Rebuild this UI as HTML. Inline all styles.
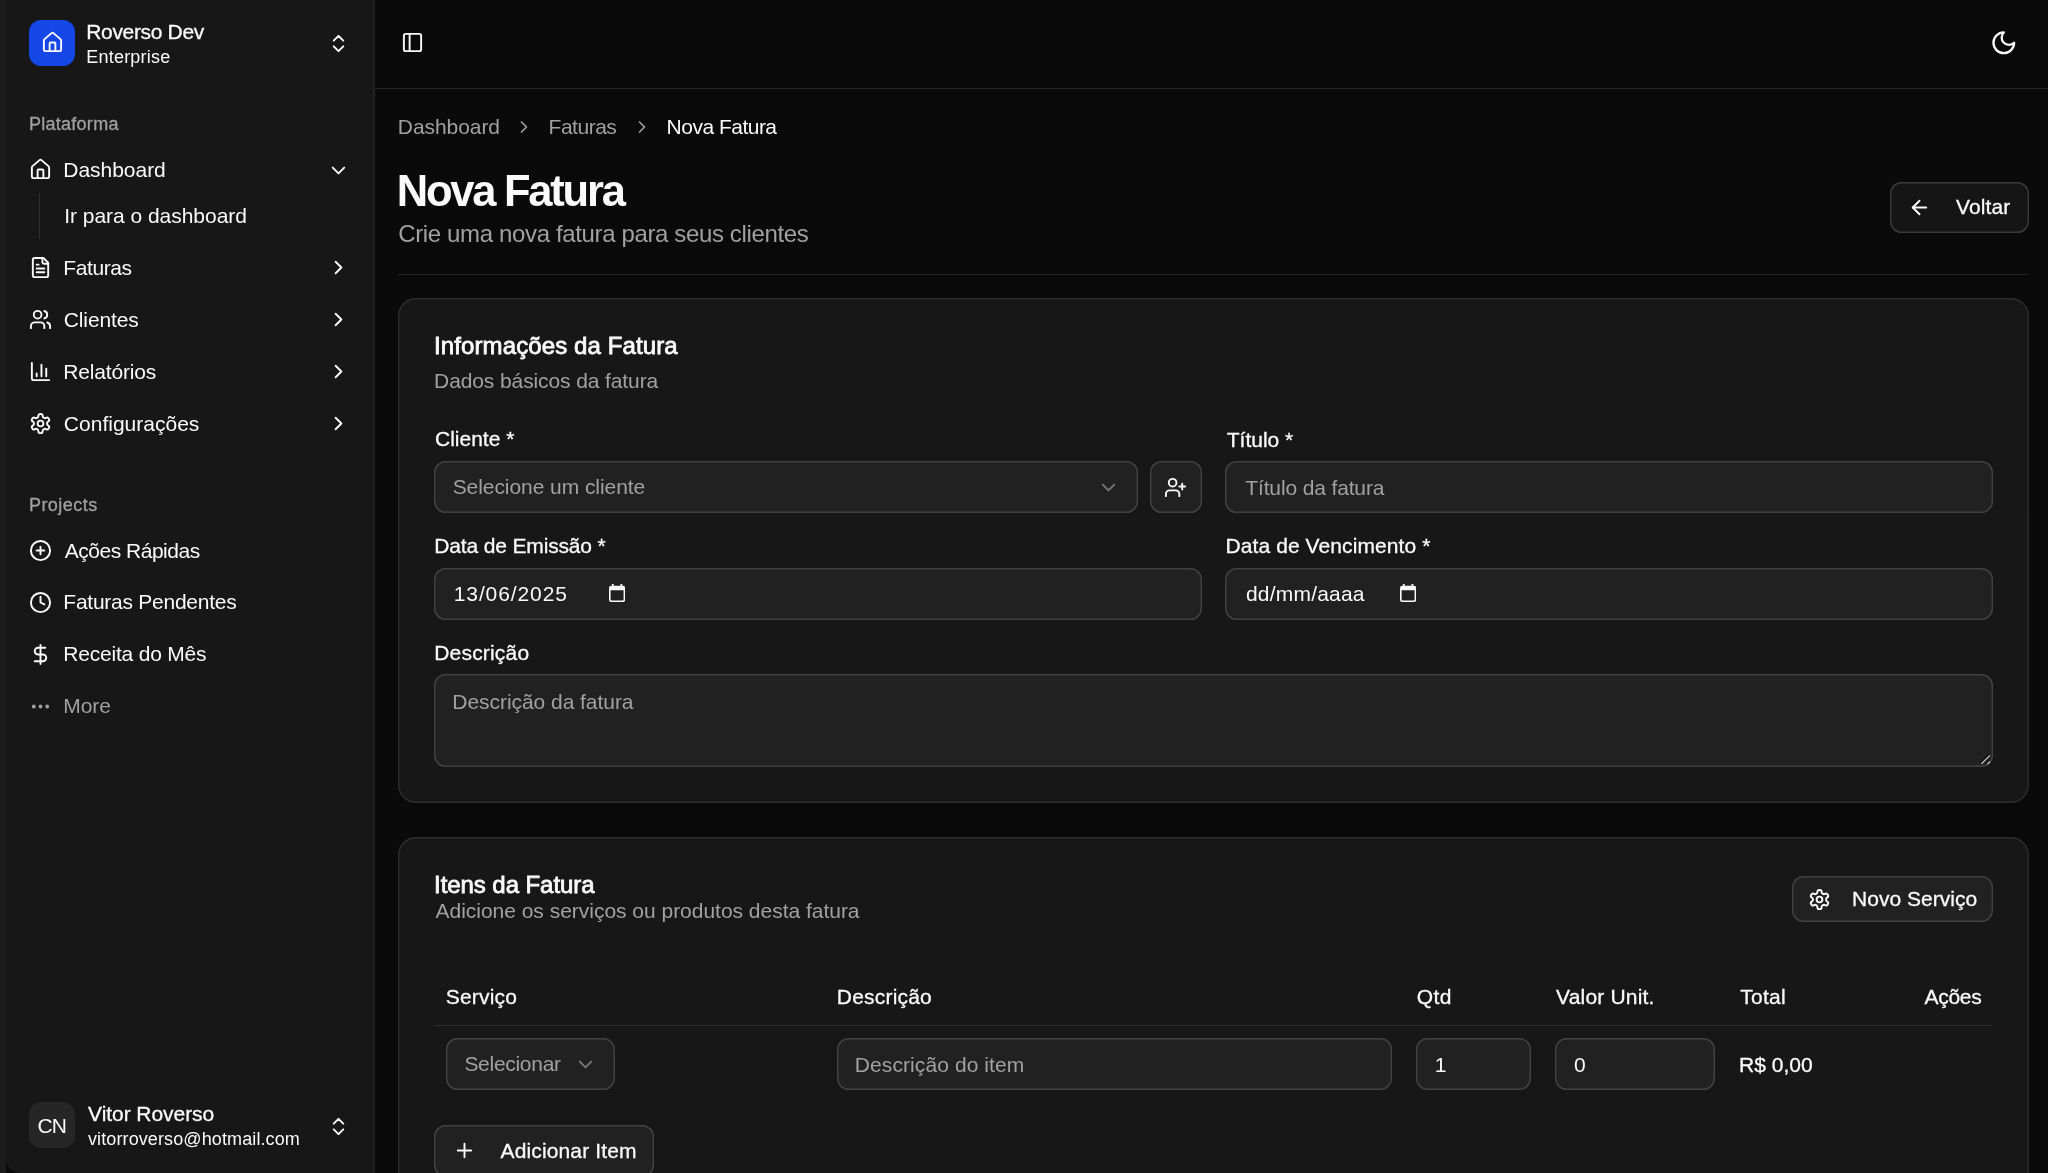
<!DOCTYPE html>
<html lang="pt-BR">
<head>
<meta charset="utf-8">
<title>Nova Fatura</title>
<style>
*{box-sizing:border-box;margin:0;padding:0}
html,body{width:2048px;height:1173px;overflow:hidden;background:#0a0a0a}
body{font-family:"Liberation Sans",sans-serif;color:#fafafa;position:relative}
#app{position:absolute;left:0;top:0;width:2048px;height:1173px;will-change:transform}
.abs{position:absolute}
.t{position:absolute;white-space:nowrap;line-height:1;font-weight:normal;color:#fafafa}
.b{font-weight:bold}
.md{-webkit-text-stroke:0.3px currentColor}
.sb{-webkit-text-stroke:0.8px currentColor}
svg.i{position:absolute;width:23px;height:23px;fill:none;stroke:#fafafa;stroke-width:2;stroke-linecap:round;stroke-linejoin:round}
#edge{left:0;top:0;width:6px;height:1173px;background:#1b1b1b}
#sidebar{left:6px;top:0;width:368px;height:1173px;background:#171717;border-bottom-left-radius:14px}
#sbline{left:373px;top:0;width:2px;height:1173px;background:#212121}
.logo{left:29px;top:20px;width:46px;height:46px;border-radius:12px;background:#1447e6}
.avatar{left:29px;top:1102px;width:46px;height:46px;border-radius:12px;background:#262626}
.subline{left:39px;top:193px;width:1px;height:46px;background:#2e2e2e}
#hdrline{left:375px;top:88px;width:1673px;height:1px;background:#262626}
.sep{left:398px;top:274px;width:1631px;height:1px;background:#242424}
.card{left:398px;width:1631px;background:#171717;box-shadow:inset 0 0 0 1.44px #2d2d2d;border-radius:18px}
.inp{position:absolute;height:52px;background:#212121;box-shadow:inset 0 0 0 1.44px #414141;border-radius:11.5px}
.btn{position:absolute;background:#151515;box-shadow:inset 0 0 0 1.44px #3a3a3a;border-radius:11.5px}
</style>
</head>
<body>
<div id="app">
<aside>
<div class="abs" id="edge"></div>
<div class="abs" id="sidebar"></div>
<div class="abs" id="sbline"></div>
<div class="abs logo"></div>
<svg class="i" style="left:40.5px;top:31.4px;" viewBox="0 0 24 24"><path d="M15 21v-8a1 1 0 0 0-1-1h-4a1 1 0 0 0-1 1v8"/><path d="M3 10a2 2 0 0 1 .709-1.528l7-5.999a2 2 0 0 1 2.582 0l7 5.999A2 2 0 0 1 21 10v9a2 2 0 0 1-2 2H5a2 2 0 0 1-2-2z"/></svg>
<svg class="i" style="left:327px;top:32px;" viewBox="0 0 24 24"><path d="m7 15 5 5 5-5"/><path d="m7 9 5-5 5 5"/></svg>
<svg class="i" style="left:29px;top:158px;" viewBox="0 0 24 24"><path d="M15 21v-8a1 1 0 0 0-1-1h-4a1 1 0 0 0-1 1v8"/><path d="M3 10a2 2 0 0 1 .709-1.528l7-5.999a2 2 0 0 1 2.582 0l7 5.999A2 2 0 0 1 21 10v9a2 2 0 0 1-2 2H5a2 2 0 0 1-2-2z"/></svg>
<svg class="i" style="left:327px;top:158.5px;" viewBox="0 0 24 24"><path d="m6 9 6 6 6-6"/></svg>
<div class="abs subline"></div>
<svg class="i" style="left:29px;top:256px;" viewBox="0 0 24 24"><path d="M15 2H6a2 2 0 0 0-2 2v16a2 2 0 0 0 2 2h12a2 2 0 0 0 2-2V7Z"/><path d="M14 2v4a2 2 0 0 0 2 2h4"/><path d="M10 9H8"/><path d="M16 13H8"/><path d="M16 17H8"/></svg>
<svg class="i" style="left:327px;top:256px;" viewBox="0 0 24 24"><path d="m9 18 6-6-6-6"/></svg>
<svg class="i" style="left:29px;top:308px;" viewBox="0 0 24 24"><path d="M16 21v-2a4 4 0 0 0-4-4H6a4 4 0 0 0-4 4v2"/><circle cx="9" cy="7" r="4"/><path d="M22 21v-2a4 4 0 0 0-3-3.87"/><path d="M16 3.13a4 4 0 0 1 0 7.75"/></svg>
<svg class="i" style="left:327px;top:308px;" viewBox="0 0 24 24"><path d="m9 18 6-6-6-6"/></svg>
<svg class="i" style="left:29px;top:360px;" viewBox="0 0 24 24"><path d="M3 3v16a2 2 0 0 0 2 2h16"/><path d="M18 17V9"/><path d="M13 17V5"/><path d="M8 17v-3"/></svg>
<svg class="i" style="left:327px;top:360px;" viewBox="0 0 24 24"><path d="m9 18 6-6-6-6"/></svg>
<svg class="i" style="left:29px;top:412px;" viewBox="0 0 24 24"><path d="M12.22 2h-.44a2 2 0 0 0-2 2v.18a2 2 0 0 1-1 1.73l-.43.25a2 2 0 0 1-2 0l-.15-.08a2 2 0 0 0-2.73.73l-.22.38a2 2 0 0 0 .73 2.73l.15.1a2 2 0 0 1 1 1.72v.51a2 2 0 0 1-1 1.74l-.15.09a2 2 0 0 0-.73 2.73l.22.38a2 2 0 0 0 2.73.73l.15-.08a2 2 0 0 1 2 0l.43.25a2 2 0 0 1 1 1.73V20a2 2 0 0 0 2 2h.44a2 2 0 0 0 2-2v-.18a2 2 0 0 1 1-1.73l.43-.25a2 2 0 0 1 2 0l.15.08a2 2 0 0 0 2.73-.73l.22-.39a2 2 0 0 0-.73-2.73l-.15-.08a2 2 0 0 1-1-1.74v-.5a2 2 0 0 1 1-1.74l.15-.09a2 2 0 0 0 .73-2.73l-.22-.38a2 2 0 0 0-2.73-.73l-.15.08a2 2 0 0 1-2 0l-.43-.25a2 2 0 0 1-1-1.73V4a2 2 0 0 0-2-2z"/><circle cx="12" cy="12" r="3"/></svg>
<svg class="i" style="left:327px;top:412px;" viewBox="0 0 24 24"><path d="m9 18 6-6-6-6"/></svg>
<svg class="i" style="left:29px;top:539px;" viewBox="0 0 24 24"><circle cx="12" cy="12" r="10"/><path d="M8 12h8"/><path d="M12 8v8"/></svg>
<svg class="i" style="left:29px;top:591px;" viewBox="0 0 24 24"><circle cx="12" cy="12" r="10"/><polyline points="12 6 12 12 16 14"/></svg>
<svg class="i" style="left:29px;top:643px;" viewBox="0 0 24 24"><line x1="12" x2="12" y1="2" y2="22"/><path d="M17 5H9.5a3.5 3.5 0 0 0 0 7h5a3.5 3.5 0 0 1 0 7H6"/></svg>
<svg class="i" style="left:29px;top:695px;stroke:#a1a1a1;" viewBox="0 0 24 24"><circle cx="12" cy="12" r="1"/><circle cx="19" cy="12" r="1"/><circle cx="5" cy="12" r="1"/></svg>
<div class="abs avatar"></div>
<svg class="i" style="left:327px;top:1114.5px;" viewBox="0 0 24 24"><path d="m7 15 5 5 5-5"/><path d="m7 9 5-5 5 5"/></svg>
<div class="t md" style="left:86.28px;top:21.34px;font-size:21px;letter-spacing:-0.336px;">Roverso Dev</div>
<div class="t" style="left:86.30px;top:47.52px;font-size:18px;letter-spacing:0.202px;">Enterprise</div>
<div class="t md" style="left:28.97px;top:114.84px;font-size:18px;letter-spacing:0.266px;color:#a1a1a1;">Plataforma</div>
<div class="t" style="left:63.33px;top:159.00px;font-size:21px;letter-spacing:-0.036px;">Dashboard</div>
<div class="t" style="left:64.19px;top:205.25px;font-size:21px;letter-spacing:-0.030px;">Ir para o dashboard</div>
<div class="t" style="left:63.33px;top:257.00px;font-size:21px;letter-spacing:-0.407px;">Faturas</div>
<div class="t" style="left:63.84px;top:308.75px;font-size:21px;letter-spacing:-0.147px;">Clientes</div>
<div class="t" style="left:63.33px;top:360.75px;font-size:21px;letter-spacing:-0.181px;">Relatórios</div>
<div class="t" style="left:63.84px;top:412.75px;font-size:21px;letter-spacing:0.009px;">Configurações</div>
<div class="t md" style="left:28.97px;top:495.84px;font-size:18px;letter-spacing:0.451px;color:#a1a1a1;">Projects</div>
<div class="t" style="left:64.75px;top:539.90px;font-size:21px;letter-spacing:-0.488px;">Ações Rápidas</div>
<div class="t" style="left:63.33px;top:591.25px;font-size:21px;letter-spacing:-0.258px;">Faturas Pendentes</div>
<div class="t" style="left:63.33px;top:643.25px;font-size:21px;letter-spacing:-0.209px;">Receita do Mês</div>
<div class="t" style="left:63.33px;top:695.25px;font-size:21px;letter-spacing:-0.096px;color:#a1a1a1;">More</div>
<div class="t" style="left:37.59px;top:1114.50px;font-size:21px;letter-spacing:-0.893px;">CN</div>
<div class="t md" style="left:88.07px;top:1103.09px;font-size:21px;letter-spacing:-0.059px;">Vitor Roverso</div>
<div class="t" style="left:88.00px;top:1130.02px;font-size:18px;letter-spacing:0.108px;">vitorroverso@hotmail.com</div>
</aside>
<main>
<div class="abs" id="hdrline"></div>
<svg class="i" style="left:401px;top:31px;" viewBox="0 0 24 24"><rect width="18" height="18" x="3" y="3" rx="2"/><path d="M9 3v18"/></svg>
<svg class="i" style="left:1989.6px;top:28.7px;width:27.6px;height:27.6px;" viewBox="0 0 24 24"><path d="M12 3a6 6 0 0 0 9 9 9 9 0 1 1-9-9Z"/></svg>
<svg class="i" style="left:513.75px;top:117px;width:20px;height:20px;stroke:#a1a1a1;" viewBox="0 0 24 24"><path d="m9 18 6-6-6-6"/></svg>
<svg class="i" style="left:632.1px;top:117px;width:20px;height:20px;stroke:#a1a1a1;" viewBox="0 0 24 24"><path d="m9 18 6-6-6-6"/></svg>
<div class="btn" style="left:1890px;top:182px;width:139px;height:51px"></div>
<svg class="i" style="left:1908px;top:196px;" viewBox="0 0 24 24"><path d="m12 19-7-7 7-7"/><path d="M19 12H5"/></svg>
<div class="abs sep"></div>

<section class="abs card" style="top:298px;height:505px"></section>
<div class="inp" style="left:434px;top:461px;width:704px"></div>
<svg class="i" style="left:1097px;top:475.5px;stroke:#767676;" viewBox="0 0 24 24"><path d="m6 9 6 6 6-6"/></svg>
<div class="inp" style="left:1150px;top:461px;width:52px"></div>
<svg class="i" style="left:1164px;top:475.5px;" viewBox="0 0 24 24"><path d="M16 21v-2a4 4 0 0 0-4-4H6a4 4 0 0 0-4 4v2"/><circle cx="9" cy="7" r="4"/><line x1="19" x2="19" y1="8" y2="14"/><line x1="22" x2="16" y1="11" y2="11"/></svg>
<div class="inp" style="left:1225px;top:461px;width:768px"></div>
<div class="inp" style="left:434px;top:568px;width:768px"></div>
<svg class="abs" style="left:608.8px;top:584.2px;width:16.2px;height:18px" viewBox="0 0 16.2 18"><path fill-rule="evenodd" d="M2.900 0h1.800v1.800h6.800V0h1.800v1.800h.6a2.300 2.300 0 0 1 2.300 2.300v11.600a2.300 2.300 0 0 1-2.300 2.300H2.300A2.300 2.300 0 0 1 0 15.700V4.100a2.300 2.300 0 0 1 2.300-2.300h.6V0zM1.600 6.300v9.300a.8.800 0 0 0 .8.800h11.400a.8.800 0 0 0 .8-.8V6.300H1.600z" fill="#fafafa"/></svg>
<div class="inp" style="left:1225px;top:568px;width:768px"></div>
<svg class="abs" style="left:1400px;top:584.2px;width:16.2px;height:18px" viewBox="0 0 16.2 18"><path fill-rule="evenodd" d="M2.900 0h1.800v1.800h6.800V0h1.800v1.800h.6a2.300 2.300 0 0 1 2.300 2.300v11.600a2.300 2.300 0 0 1-2.300 2.300H2.300A2.300 2.300 0 0 1 0 15.700V4.100a2.300 2.300 0 0 1 2.300-2.300h.6V0zM1.600 6.300v9.300a.8.800 0 0 0 .8.800h11.400a.8.800 0 0 0 .8-.8V6.300H1.600z" fill="#fafafa"/></svg>
<div class="inp" style="left:434px;top:674px;width:1559px;height:93px"></div>
<svg class="abs" style="left:1978px;top:752px;width:14px;height:14px" viewBox="0 0 14 14"><path d="M2.500 10.800 11.100 2.500M8.500 11.100l2.600-2.400" stroke="#0c0c0c" stroke-width="1.300" fill="none"/><path d="M3.400 11.700 12 3.400M9.400 12l2.600-2.400" stroke="#c6c6c6" stroke-width="1.300" fill="none"/></svg>

<section class="abs card" style="top:837px;height:400px"></section>
<div class="btn" style="left:1792px;top:876px;width:201px;height:46px;background:#212121;box-shadow:inset 0 0 0 1.44px #414141"></div>
<svg class="i" style="left:1808px;top:888px;" viewBox="0 0 24 24"><path d="M12.22 2h-.44a2 2 0 0 0-2 2v.18a2 2 0 0 1-1 1.73l-.43.25a2 2 0 0 1-2 0l-.15-.08a2 2 0 0 0-2.73.73l-.22.38a2 2 0 0 0 .73 2.73l.15.1a2 2 0 0 1 1 1.72v.51a2 2 0 0 1-1 1.74l-.15.09a2 2 0 0 0-.73 2.73l.22.38a2 2 0 0 0 2.73.73l.15-.08a2 2 0 0 1 2 0l.43.25a2 2 0 0 1 1 1.73V20a2 2 0 0 0 2 2h.44a2 2 0 0 0 2-2v-.18a2 2 0 0 1 1-1.73l.43-.25a2 2 0 0 1 2 0l.15.08a2 2 0 0 0 2.73-.73l.22-.39a2 2 0 0 0-.73-2.73l-.15-.08a2 2 0 0 1-1-1.74v-.5a2 2 0 0 1 1-1.74l.15-.09a2 2 0 0 0 .73-2.73l-.22-.38a2 2 0 0 0-2.73-.73l-.15.08a2 2 0 0 1-2 0l-.43-.25a2 2 0 0 1-1-1.73V4a2 2 0 0 0-2-2z"/><circle cx="12" cy="12" r="3"/></svg>
<div class="abs" style="left:434px;top:1025px;width:1559px;height:1px;background:#2e2e2e"></div>
<div class="inp" style="left:446px;top:1038px;width:169px"></div>
<svg class="i" style="left:573.6px;top:1053px;stroke:#767676;" viewBox="0 0 24 24"><path d="m6 9 6 6 6-6"/></svg>
<div class="inp" style="left:837px;top:1038px;width:555px"></div>
<div class="inp" style="left:1416px;top:1038px;width:115px"></div>
<div class="inp" style="left:1555px;top:1038px;width:160px"></div>
<div class="btn" style="left:434px;top:1125px;width:220px;height:52px;background:#212121;box-shadow:inset 0 0 0 1.44px #414141"></div>
<svg class="i" style="left:452.6px;top:1139.25px;" viewBox="0 0 24 24"><path d="M5 12h14"/><path d="M12 5v14"/></svg>
<div class="t" style="left:397.83px;top:116.25px;font-size:21px;letter-spacing:-0.067px;color:#a1a1a1;">Dashboard</div>
<div class="t" style="left:548.58px;top:116.25px;font-size:21px;letter-spacing:-0.490px;color:#a1a1a1;">Faturas</div>
<div class="t" style="left:666.58px;top:116.25px;font-size:21px;letter-spacing:-0.509px;">Nova Fatura</div>
<h1 class="t b" style="left:396.70px;top:169.50px;font-size:43.5px;letter-spacing:-2.225px;">Nova Fatura</h1>
<div class="t" style="left:398.25px;top:221.75px;font-size:24px;letter-spacing:-0.362px;color:#a1a1a1;">Crie uma nova fatura para seus clientes</div>
<div class="t md" style="left:1956.07px;top:196.09px;font-size:21px;letter-spacing:0.095px;">Voltar</div>
<div class="t sb" style="left:434.04px;top:334.06px;font-size:24px;letter-spacing:0.105px;">Informações da Fatura</div>
<div class="t" style="left:434.08px;top:369.50px;font-size:21px;letter-spacing:-0.106px;color:#a1a1a1;">Dados básicos da fatura</div>
<div class="t md" style="left:434.98px;top:428.34px;font-size:21px;">Cliente *</div>
<div class="t" style="left:452.64px;top:476.00px;font-size:21px;letter-spacing:-0.062px;color:#a1a1a1;">Selecione um cliente</div>
<div class="t md" style="left:1226.73px;top:428.84px;font-size:21px;">Título *</div>
<div class="t" style="left:1245.31px;top:477.00px;font-size:21px;letter-spacing:-0.141px;color:#a1a1a1;">Título da fatura</div>
<div class="t md" style="left:434.28px;top:535.09px;font-size:21px;letter-spacing:-0.152px;">Data de Emissão *</div>
<div class="t" style="left:453.72px;top:583.00px;font-size:21px;letter-spacing:0.902px;">13/06/2025</div>
<div class="t md" style="left:1225.53px;top:535.09px;font-size:21px;letter-spacing:0.089px;">Data de Vencimento *</div>
<div class="t" style="left:1245.98px;top:582.75px;font-size:21px;letter-spacing:0.201px;">dd/mm/aaaa</div>
<div class="t md" style="left:434.28px;top:642.09px;font-size:21px;letter-spacing:0.182px;">Descrição</div>
<div class="t" style="left:452.33px;top:690.75px;font-size:21px;letter-spacing:-0.050px;color:#a1a1a1;">Descrição da fatura</div>
<div class="t sb" style="left:434.04px;top:873.06px;font-size:24px;letter-spacing:-0.064px;">Itens da Fatura</div>
<div class="t" style="left:435.50px;top:899.50px;font-size:21px;letter-spacing:-0.020px;color:#a1a1a1;">Adicione os serviços ou produtos desta fatura</div>
<div class="t md" style="left:1852.03px;top:888.09px;font-size:21px;letter-spacing:0.030px;">Novo Serviço</div>
<div class="t md" style="left:445.74px;top:985.84px;font-size:21px;letter-spacing:0.187px;">Serviço</div>
<div class="t md" style="left:836.78px;top:985.84px;font-size:21px;letter-spacing:0.207px;">Descrição</div>
<div class="t md" style="left:1416.77px;top:985.84px;font-size:21px;letter-spacing:0.463px;">Qtd</div>
<div class="t md" style="left:1556.07px;top:985.84px;font-size:21px;letter-spacing:0.181px;">Valor Unit.</div>
<div class="t md" style="left:1740.23px;top:985.84px;font-size:21px;letter-spacing:0.281px;">Total</div>
<div class="t md" style="left:1924.60px;top:985.84px;font-size:21px;letter-spacing:-0.333px;">Ações</div>
<div class="t" style="left:464.39px;top:1053.25px;font-size:21px;letter-spacing:-0.283px;color:#a1a1a1;">Selecionar</div>
<div class="t" style="left:854.78px;top:1053.50px;font-size:21px;letter-spacing:0.093px;color:#a1a1a1;">Descrição do item</div>
<div class="t" style="left:1434.72px;top:1054.00px;font-size:21px;">1</div>
<div class="t" style="left:1574.00px;top:1054.00px;font-size:21px;">0</div>
<div class="t md" style="left:1739.03px;top:1053.59px;font-size:21px;letter-spacing:0.028px;">R$ 0,00</div>
<div class="t md" style="left:500.60px;top:1139.84px;font-size:21px;letter-spacing:0.124px;">Adicionar Item</div>
</main>
</div>
</body>
</html>
